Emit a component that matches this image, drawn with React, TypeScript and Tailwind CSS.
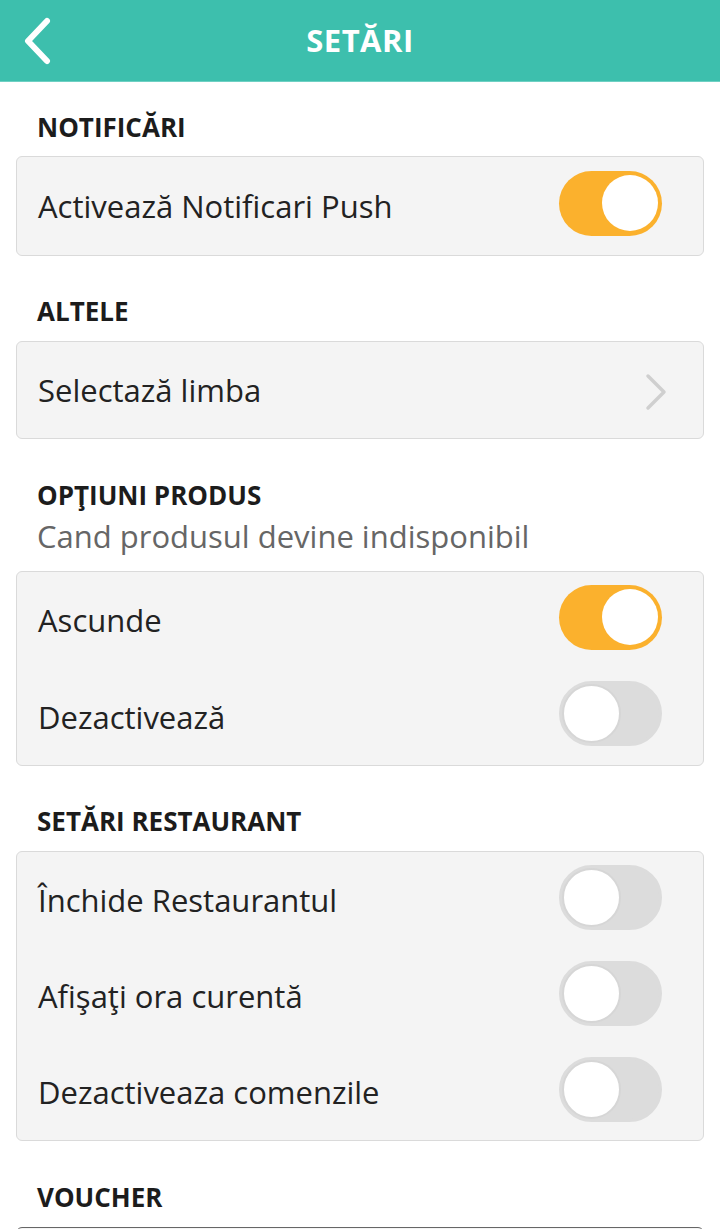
import React from "react";

function Toggle({ on }: { on: boolean }) {
  return on ? (
    <div className="mb-[6px] flex h-[65px] w-[103px] items-center justify-end rounded-full bg-[#fbb12d] pr-[4px]">
      <div className="h-[56px] w-[56px] rounded-full bg-white" />
    </div>
  ) : (
    <div className="mb-[6px] flex h-[65px] w-[103px] items-center rounded-full border-[3px] border-[#dcdcdc] bg-[#dcdcdc]">
      <div className="h-[59px] w-[59px] rounded-full border-[2px] border-[#d6d6d6] bg-white" />
    </div>
  );
}

function Row({ label, on, h = "h-[96px]" }: { label: string; on: boolean; h?: string }) {
  return (
    <div className={`flex ${h} items-center justify-between pl-[21px] pr-[41px]`}>
      <span className="text-[31px] text-[#222]">{label}</span>
      <Toggle on={on} />
    </div>
  );
}

function Heading({ children, pt }: { children: React.ReactNode; pt: string }) {
  return (
    <div className={`${pt} px-[37px] text-[26px] font-bold leading-[30px] text-[#1c1c1c]`}>
      {children}
    </div>
  );
}

function Card({ children, mt = "mt-[15px]" }: { children: React.ReactNode; mt?: string }) {
  return (
    <div className={`mx-[16px] ${mt} rounded-[6px] border border-[#dadada] bg-[#f4f4f4]`}>
      {children}
    </div>
  );
}

export default function App() {
  return (
    <div className="min-h-screen bg-white font-['Open_Sans',sans-serif]">
      {/* Header */}
      <div className="relative flex h-[82px] items-center justify-center border-b border-[#6fd0c3] bg-[#3dbfad]">
        <svg
          className="absolute left-[20px] top-[17px]"
          width="32"
          height="48"
          viewBox="0 0 32 48"
          fill="none"
        >
          <path d="M27 4 L8 24 L27 44" stroke="white" strokeWidth="6" strokeLinecap="round" strokeLinejoin="round" />
        </svg>
        <span className="text-[31px] font-bold tracking-[0.5px] text-white">SETĂRI</span>
      </div>

      <Heading pt="pt-[30px]">NOTIFICĂRI</Heading>
      <Card mt="mt-[14px]">
        <Row label="Activează Notificari Push" on h="h-[98px]" />
      </Card>

      <Heading pt="pt-[40px]">ALTELE</Heading>
      <Card>
        <div className="flex h-[96px] items-center justify-between pl-[21px] pr-[34px]">
          <span className="text-[31px] text-[#222]">Selectază limba</span>
          <svg width="26" height="38" viewBox="0 0 26 38" fill="none" className="mt-[4px]">
            <path d="M5 3 L21 19 L5 35" stroke="#cfcfcf" strokeWidth="3.5" strokeLinecap="round" strokeLinejoin="round" />
          </svg>
        </div>
      </Card>

      <Heading pt="pt-[41px]">OPŢIUNI PRODUS</Heading>
      <div className="px-[37px] pt-[7px] text-[31px] leading-[38px] text-[#666]">
        Cand produsul devine indisponibil
      </div>
      <Card mt="mt-[16px]">
        <Row label="Ascunde" on h="h-[96.5px]" />
        <Row label="Dezactivează" on={false} h="h-[96.5px]" />
      </Card>

      <Heading pt="pt-[40px]">SETĂRI RESTAURANT</Heading>
      <Card>
        <Row label="Închide Restaurantul" on={false} />
        <Row label="Afişaţi ora curentă" on={false} />
        <Row label="Dezactiveaza comenzile" on={false} />
      </Card>

      <Heading pt="pt-[41px]">VOUCHER</Heading>
      <div className="mx-[16px] mt-[15px] h-[96px] rounded-[6px] border border-[#666] bg-[#f4f4f4]" />
    </div>
  );
}
